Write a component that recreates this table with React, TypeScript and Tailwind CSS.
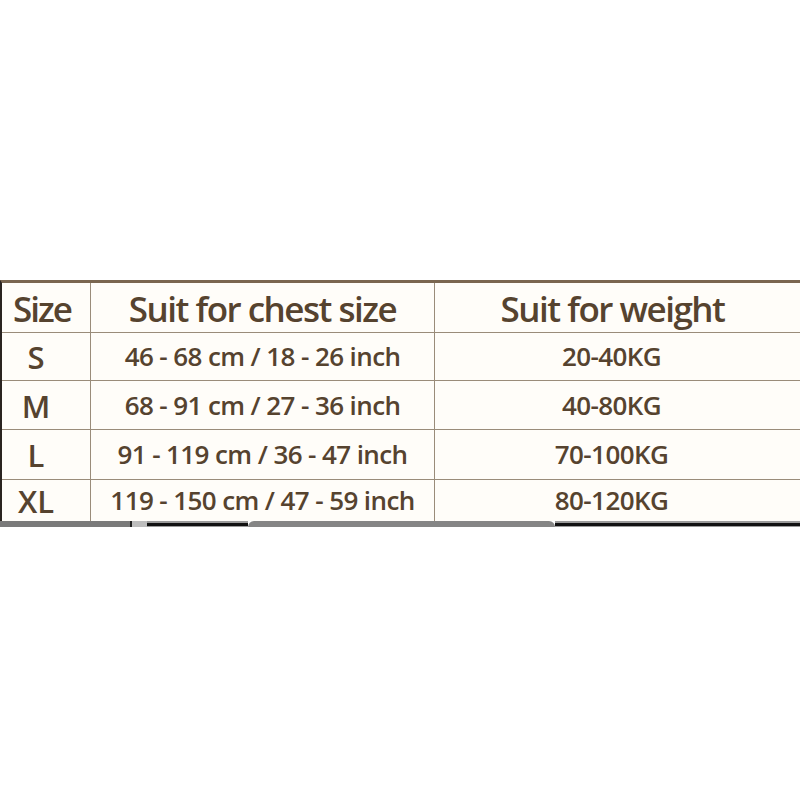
import React from "react";

const rows = [
  ["S", "46 - 68 cm / 18 - 26 inch", "20-40KG", "h-[48px]"],
  ["M", "68 - 91 cm / 27 - 36 inch", "40-80KG", "h-[49px]"],
  ["L", "91 - 119 cm / 36 - 47 inch", "70-100KG", "h-[50px]"],
  ["XL", "119 - 150 cm / 47 - 59 inch", "80-120KG", "h-[41px]"],
];

export default function App() {
  return (
    <div className="w-[800px] h-[800px] bg-white flex flex-col" style={{ fontFamily: '"Open Sans", "Noto Sans", sans-serif' }}>
      <div className="h-[280px] bg-white" />
      <div className="bg-[#fffdf9] border-t-[3px] border-[#7a6650] border-l-2 border-l-[#2a2420] text-[#56432f] font-semibold">
        <div className="flex h-[50px] border-b border-[#9a8c7a]">
          <div className="w-[89px] flex items-center justify-center pt-[4px] pr-[8px] text-[35px] tracking-[-2px] border-r border-[#9a8c7a]">Size</div>
          <div className="w-[344px] flex items-center justify-center pt-[4px] text-[35px] tracking-[-1.5px] border-r border-[#9a8c7a]">Suit for chest size</div>
          <div className="flex-1 flex items-center justify-center pt-[4px] text-[35px] tracking-[-1.5px] pr-[10px]">Suit for weight</div>
        </div>
        {rows.map(([s, c, w, h], i) => (
          <div key={s} className={`flex ${h} ${i < 3 ? "border-b border-[#9a8c7a]" : ""}`}>
            <div className="w-[89px] flex items-center justify-center pr-[20px] pt-[2px] text-[31px] border-r border-[#9a8c7a]">{s}</div>
            <div className="w-[344px] flex items-center justify-center text-[26px] tracking-[-0.6px] border-r border-[#9a8c7a]">{c}</div>
            <div className="flex-1 flex items-center justify-center text-[26px] tracking-[-0.6px] pr-[12px]">{w}</div>
          </div>
        ))}
      </div>
      <div className="h-[6px] flex items-stretch">
        <div className="w-[130px] bg-[#7a7a7a]" />
        <div className="w-[2px] bg-[#222]" />
        <div className="w-[15px] bg-[#bdbdbd]" />
        <div className="w-[101px] flex flex-col justify-center bg-[#9a9a9a]"><div className="h-[3px] bg-[#111]" /></div>
        <div className="w-[307px] bg-[#858585] rounded-t-[6px]" />
        <div className="flex-1 flex flex-col justify-center bg-[#9a9a9a]"><div className="h-[3px] bg-[#111]" /></div>
      </div>
      <div className="flex-1 bg-white" />
    </div>
  );
}
